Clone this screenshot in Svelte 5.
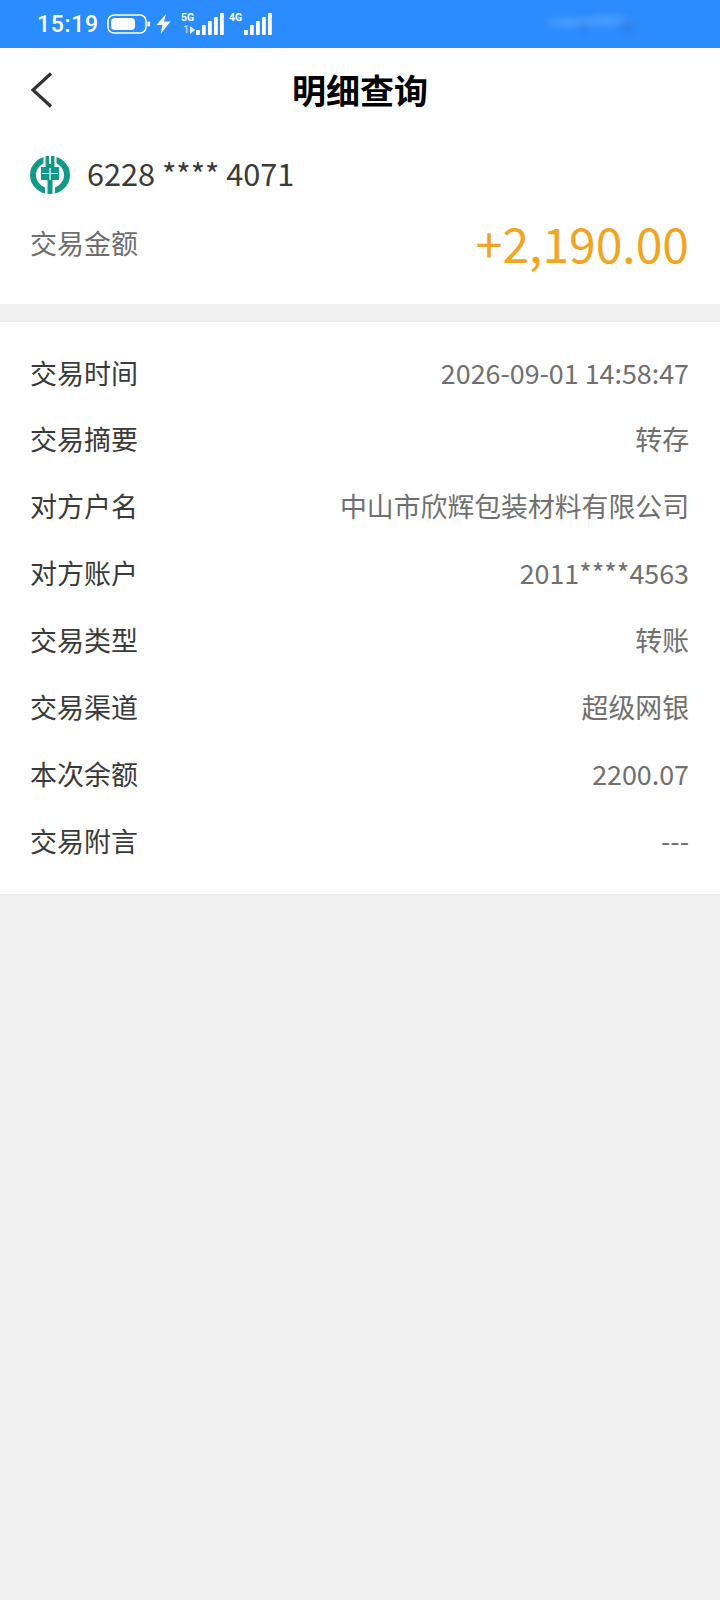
<script>
  const rows = [
    ['交易时间', '2026-09-01 14:58:47'],
    ['交易摘要', '转存'],
    ['对方户名', '中山市欣辉包装材料有限公司'],
    ['对方账户', '2011****4563'],
    ['交易类型', '转账'],
    ['交易渠道', '超级网银'],
    ['本次余额', '2200.07'],
    ['交易附言', '---']
  ];

  // signal bars, left to right, as [x, top]
  const bars = [[0, 17], [6, 12], [12, 8], [18, 4], [24, 0]];
</script>

<div class="page">
  <div class="status">
    <span class="clock">15:19</span>
    <svg class="battery" width="43" height="20" viewBox="0 0 43 20">
      <rect x="1" y="1" width="38" height="18" rx="6" fill="none" stroke="#fff" stroke-width="1.6" />
      <rect x="4" y="4" width="24" height="12" rx="4" fill="#fff" />
      <rect x="40.5" y="7.5" width="2.5" height="5" rx="1" fill="#fff" />
    </svg>
    <svg class="bolt" width="15" height="20" viewBox="0 0 15 20">
      <path d="M10 0 L0.5 11 H6.5 L4.5 20 L14.5 7.5 H8 Z" fill="#fff" />
    </svg>
    <div class="signal first">
      <span class="net">5G</span>
      <span class="sub">1</span>
      <svg width="29" height="22" viewBox="0 0 29 22">
        {#each bars as [x, top]}
          <rect {x} y={top} width="3.8" height={22 - top} fill="#fff" rx="0.8" />
        {/each}
      </svg>
    </div>
    <div class="signal second">
      <span class="net">4G</span>
      <svg width="29" height="22" viewBox="0 0 29 22">
        {#each bars as [x, top]}
          <rect {x} y={top} width="3.8" height={22 - top} fill="#fff" rx="0.8" />
        {/each}
      </svg>
    </div>
    <div class="smudge"></div>
  </div>

  <header class="nav">
    <svg class="back" width="26" height="38" viewBox="0 0 26 38">
      <path d="M23 2.5 L5 19 L23 35.5" fill="none" stroke="#333" stroke-width="3.2" />
    </svg>
    <h1>明细查询</h1>
  </header>

  <section class="summary">
    <div class="card">
      <svg class="logo" width="40" height="38" viewBox="0 0 40 38">
        <ellipse cx="20" cy="19" rx="17" ry="16" fill="none" stroke="#12998a" stroke-width="6" />
        <!-- wheat ear: top prongs, grain block with cross, stem -->
        <rect x="13.5" y="0" width="13" height="12" fill="#fff" />
        <rect x="15.5" y="0" width="9" height="12" fill="#12998a" />
        <rect x="19" y="0" width="2" height="8" fill="#fff" />
        <rect x="11" y="11" width="18" height="13" fill="#12998a" />
        <path d="M20 12 V24 M12 17.5 H28" stroke="#fff" stroke-width="1.2" />
        <rect x="15" y="24" width="10" height="14" fill="#fff" />
        <rect x="17.5" y="24" width="5" height="14" fill="#12998a" />
      </svg>
      <span class="number">6228 **** 4071</span>
    </div>
    <div class="amount">
      <span class="amount-label">交易金额</span>
      <span class="amount-value">+2,190.00</span>
    </div>
  </section>

  <section class="details">
    {#each rows as [label, value]}
      <div class="row">
        <span class="label">{label}</span>
        <span class="value">{value}</span>
      </div>
    {/each}
  </section>
</div>

<style>
  :global(body) {
    margin: 0;
    background: #f0f0f0;
  }

  .page {
    min-height: 1600px;
    background: #f0f0f0;
    font-family: "Noto Sans CJK SC", "Noto Sans", sans-serif;
  }

  .status {
    position: relative;
    height: 48px;
    background: #2a8cff;
    display: flex;
    align-items: center;
    padding-left: 37px;
    color: #fff;
    box-sizing: border-box;
  }

  .clock {
    font-family: Roboto, sans-serif;
    font-size: 23px;
    font-weight: 500;
    letter-spacing: 0.7px;
    width: 70px;
  }

  .bolt {
    margin-left: 6px;
  }

  .signal {
    position: relative;
    height: 22px;
    display: flex;
    justify-content: flex-end;
  }

  .signal.first {
    margin-left: 10px;
    width: 44px;
  }

  .signal.second {
    margin-left: 4px;
    width: 44px;
  }

  .net {
    position: absolute;
    left: 0;
    top: -1px;
    font-family: Roboto, sans-serif;
    font-size: 10.5px;
    font-weight: 700;
    line-height: 11px;
    color: #fff;
  }

  .sub {
    position: absolute;
    left: 2px;
    top: 12px;
    display: flex;
    align-items: center;
    font-family: Roboto, sans-serif;
    font-size: 11px;
    font-weight: 700;
    line-height: 10px;
    color: #a9d0ff;
  }

  .sub::after {
    content: '';
    margin-left: 1px;
    border-left: 5px solid #e4f0ff;
    border-top: 4px solid transparent;
    border-bottom: 4px solid transparent;
  }

  .smudge {
    position: absolute;
    left: 545px;
    top: 8px;
    width: 95px;
    height: 32px;
    background:
      radial-gradient(circle at 41% 62%, rgba(50, 120, 215, 0.55), transparent 14%),
      radial-gradient(circle at 87% 60%, rgba(50, 120, 215, 0.65), transparent 13%),
      radial-gradient(ellipse at 25% 45%, rgba(130, 185, 250, 0.4), transparent 34%),
      radial-gradient(ellipse at 65% 40%, rgba(130, 185, 250, 0.4), transparent 38%);
    filter: blur(2px);
  }

  .nav {
    height: 83px;
    background: #fff;
    position: relative;
    display: flex;
    align-items: center;
    justify-content: center;
  }

  .back {
    position: absolute;
    left: 28px;
    top: 23px;
  }

  h1 {
    margin: 0;
    font-size: 34px;
    font-weight: 700;
    color: #000;
    line-height: 1;
  }

  .summary {
    background: #fff;
    height: 173px;
    padding: 25px 30px 0 30px;
    box-sizing: border-box;
  }

  .card {
    display: flex;
    align-items: center;
    height: 38px;
    gap: 17px;
  }

  .number {
    font-size: 30.7px;
    color: #3a3a3a;
    line-height: 1;
    margin-bottom: 4px;
  }

  .amount {
    display: flex;
    justify-content: space-between;
    align-items: flex-start;
    margin: 18px 1px 0 1px;
  }

  .amount-label {
    font-size: 27px;
    color: #6e6e6e;
    line-height: 1;
    margin-top: 17px;
    margin-left: -1px;
  }

  .amount-value {
    font-size: 48px;
    color: #f0a623;
    line-height: 60px;
  }

  .details {
    margin-top: 18px;
    background: #fff;
    padding: 16.6px 31px 20.4px 30px;
  }

  .row {
    height: 66.9px;
    display: flex;
    justify-content: space-between;
    align-items: center;
    font-size: 27px;
  }

  .label {
    color: #3a3a3a;
  }

  .value {
    font-size: 26.85px;
    color: #707070;
  }
</style>
